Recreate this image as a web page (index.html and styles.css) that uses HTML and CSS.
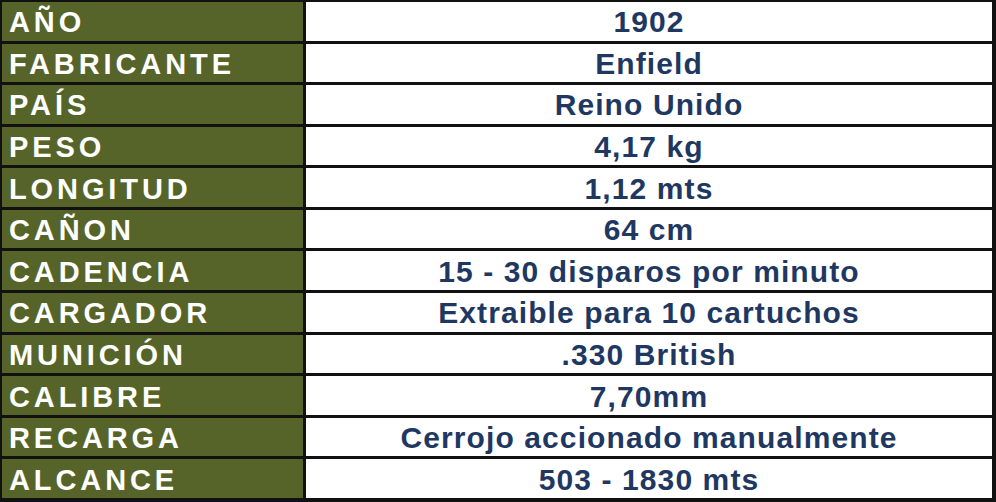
FILE: index.html
```html
<!DOCTYPE html>
<html lang="es">
<head>
<meta charset="utf-8">
<title>Ficha técnica</title>
<link rel="stylesheet" href="styles.css">
</head>
<body>
<div class="sheet">
  <div class="label">AÑO</div><div class="value">1902</div>
  <div class="label">FABRICANTE</div><div class="value">Enfield</div>
  <div class="label">PAÍS</div><div class="value">Reino Unido</div>
  <div class="label">PESO</div><div class="value">4,17 kg</div>
  <div class="label">LONGITUD</div><div class="value">1,12 mts</div>
  <div class="label">CAÑON</div><div class="value">64 cm</div>
  <div class="label">CADENCIA</div><div class="value">15 - 30 disparos por minuto</div>
  <div class="label">CARGADOR</div><div class="value">Extraible para 10 cartuchos</div>
  <div class="label">MUNICIÓN</div><div class="value">.330 British</div>
  <div class="label">CALIBRE</div><div class="value">7,70mm</div>
  <div class="label">RECARGA</div><div class="value">Cerrojo accionado manualmente</div>
  <div class="label">ALCANCE</div><div class="value">503 - 1830 mts</div>
</div>
</body>
</html>
```

FILE: styles.css
```css
html, body {
  margin: 0;
  padding: 0;
  background: #ffffff;
}

.sheet {
  box-sizing: border-box;
  width: 996px;
  height: 502px;
  display: grid;
  grid-template-columns: 301px 1fr;
  grid-template-rows: repeat(12, 1fr);
  column-gap: 3px;
  row-gap: 3px;
  padding: 2px 4px 4px 2px;
  background: #111111;
  font-family: "Liberation Sans", Arial, sans-serif;
  font-weight: bold;
}

.label {
  background: #56642a;
  color: #ffffff;
  font-size: 29px;
  letter-spacing: 3.9px;
  display: flex;
  align-items: center;
  padding: 3px 0 0 7px;
  white-space: nowrap;
}

.value {
  background: #ffffff;
  color: #1f3862;
  font-size: 30px;
  letter-spacing: 1.1px;
  display: flex;
  align-items: center;
  justify-content: center;
  padding-top: 2px;
  white-space: nowrap;
}
```
